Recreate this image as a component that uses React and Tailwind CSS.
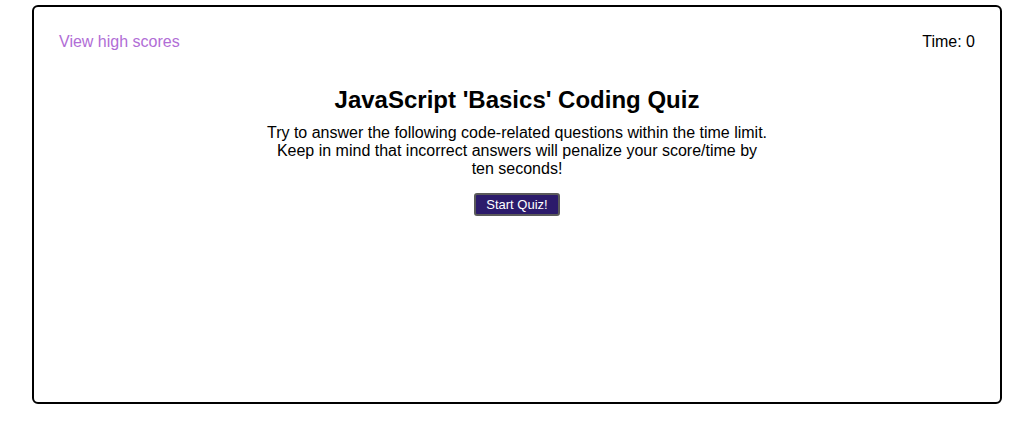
export default function App() {
  return (
    <div className="w-[1022px] h-[431px] bg-white pt-[5px] pl-[32px]" style={{ fontFamily: '"Liberation Sans", Arial, sans-serif' }}>
      <div className="w-[970px] h-[399px] border-2 border-black rounded-[6px] px-[25px] pt-[26px]">
        <div className="flex justify-between items-center text-[16px] leading-[18px]">
          <a className="text-[#b16dd6]">View high scores</a>
          <span className="text-black">Time: 0</span>
        </div>
        <div className="flex flex-col items-center mt-[35px]">
          <h1 className="text-[24px] font-bold leading-[28px] text-black">JavaScript 'Basics' Coding Quiz</h1>
          <p className="mt-[10px] w-[503px] text-center text-[16px] leading-[18px] text-black">
            Try to answer the following code-related questions within the time limit. Keep in mind that incorrect answers will penalize your score/time by ten seconds!
          </p>
          <button className="mt-[15px] h-[23px] px-[10px] bg-[#2c1b6b] text-white text-[13px] leading-[16px] rounded-[3px] border-2 border-[#5a5a5a]">
            Start Quiz!
          </button>
        </div>
      </div>
    </div>
  );
}
